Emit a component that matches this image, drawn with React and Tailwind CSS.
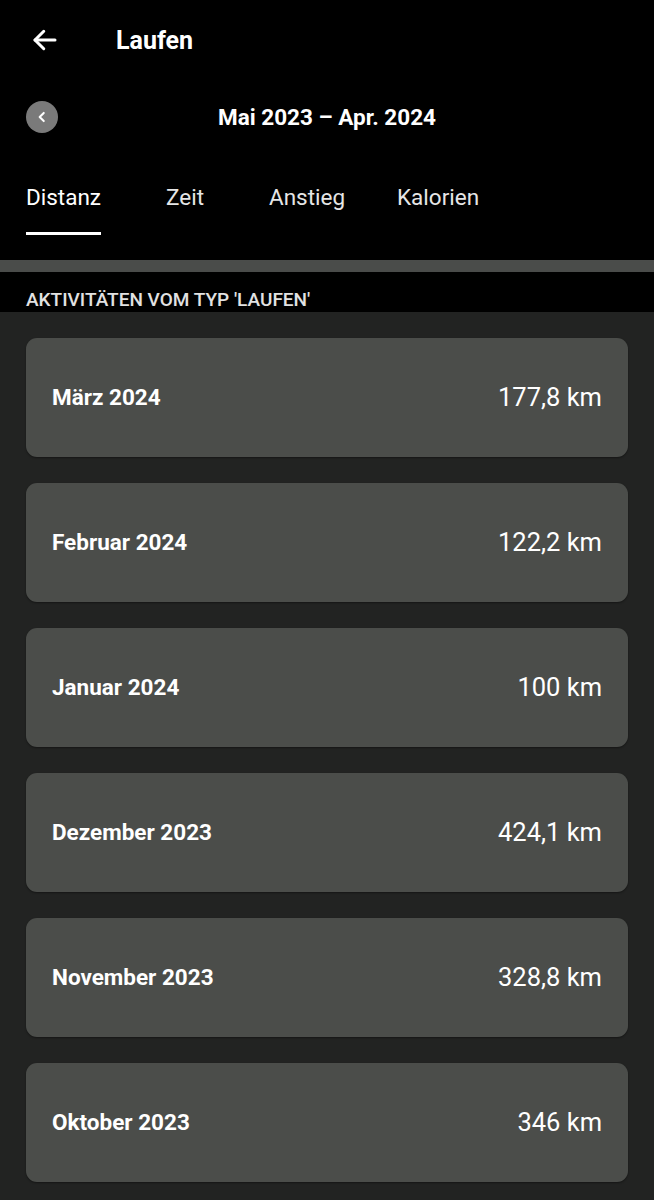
import React from "react";

const rows = [
  ["März 2024", "177,8 km"],
  ["Februar 2024", "122,2 km"],
  ["Januar 2024", "100 km"],
  ["Dezember 2023", "424,1 km"],
  ["November 2023", "328,8 km"],
  ["Oktober 2023", "346 km"],
];

const tabs = [
  ["Distanz", "w-[140px]", true],
  ["Zeit", "w-[103px]", false],
  ["Anstieg", "w-[128px]", false],
  ["Kalorien", "", false],
];

export default function App() {
  return (
    <div className="w-[654px] h-[1200px] overflow-hidden bg-[#222322] text-white" style={{ fontFamily: "Roboto, 'Noto Sans', sans-serif" }}>
      <div className="bg-black">
        <div className="h-[80px] flex items-center">
          <div className="w-[116px] pl-[30px] flex items-center">
            <svg width="30" height="30" viewBox="0 0 24 24" fill="none" stroke="white" strokeWidth="2.4" strokeLinecap="round" strokeLinejoin="round">
              <path d="M20 12H4" />
              <path d="M11 5l-7 7 7 7" />
            </svg>
          </div>
          <div className="text-[25px] font-bold leading-none">Laufen</div>
        </div>
        <div className="h-[74px] flex items-center px-[26px]">
          <div className="w-[32px] h-[32px] rounded-full bg-[#7a7a7a] flex items-center justify-center">
            <svg width="14" height="14" viewBox="0 0 24 24" fill="none" stroke="white" strokeWidth="3.5" strokeLinecap="round" strokeLinejoin="round">
              <path d="M15 5l-7 7 7 7" />
            </svg>
          </div>
          <div className="flex-1 text-center text-[22.5px] font-bold leading-none">Mai 2023 – Apr. 2024</div>
          <div className="w-[32px]" />
        </div>
        <div className="h-[106px] flex items-start pl-[26px] pt-[32px]">
          {tabs.map(([t, w, active]) => (
            <div key={t} className={w}>
              <div className="inline-flex flex-col">
                <div className={`text-[22.5px] leading-none ${active ? "text-white" : "text-[#e6e6e6]"}`}>{t}</div>
                {active && <div className="mt-[23px] h-[3px] bg-white" />}
              </div>
            </div>
          ))}
        </div>
        <div className="h-[12px] bg-[#4a4c4a]" />
        <div className="h-[40px] pl-[26px] pt-[18px]">
          <div className="text-[19px] font-medium leading-none text-[#e2e2e2]">AKTIVITÄTEN VOM TYP 'LAUFEN'</div>
        </div>
      </div>
      <div className="flex flex-col gap-[26px] px-[26px] pt-[26px]">
        {rows.map(([m, v]) => (
          <div key={m} className="h-[119px] rounded-[11px] bg-[#4b4d4a] flex items-center justify-between px-[26px] shadow-[0_1px_2px_rgba(0,0,0,0.4)]">
            <div className="text-[22.5px] font-bold">{m}</div>
            <div className="text-[25.5px]">{v}</div>
          </div>
        ))}
      </div>
    </div>
  );
}
